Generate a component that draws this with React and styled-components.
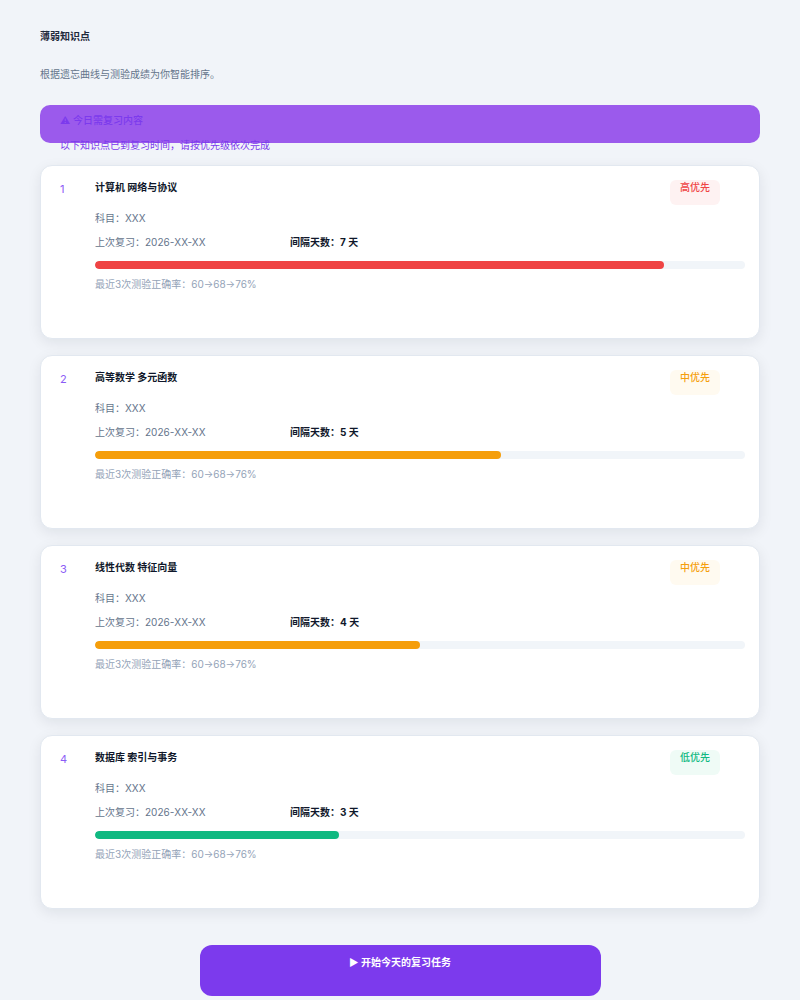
import React from 'react';
import styled, { createGlobalStyle } from 'styled-components';

const GlobalStyle = createGlobalStyle`
  html, body {
    margin: 0;
    padding: 0;
    background: #f1f4f9;
  }
  body {
    font-family: Inter, "Noto Sans CJK SC", sans-serif;
    font-size: 10px;
    line-height: 14px;
    color: #1e293b;
  }
`

const Page = styled.div`
  padding: 29px 40px 40px;
  min-height: 1000px;
  box-sizing: border-box;
`
const Title = styled.h1`
  margin: 0;
  font-size: 10px;
  line-height: 14px;
  font-weight: 700;
  color: #1e293b;
`
const Subtitle = styled.p`
  margin: 24px 0 0;
  color: #64748b;
`
const Banner = styled.div`
  margin-top: 24px;
  height: 38px;
  box-sizing: border-box;
  padding: 8px 20px 0;
  border-radius: 10px;
  background: #9b5aec;
  color: #7c3aed;
`
const BannerTitle = styled.div`
  font-weight: 500;
`
const BannerText = styled.div`
  margin-top: 11px;
  color: #7c3aed;
`
const List = styled.div`
  margin-top: 22px;
  display: flex;
  flex-direction: column;
  gap: 16px;
`
const Card = styled.div`
  height: 174px;
  box-sizing: border-box;
  padding: 14px 14px 0 19px;
  display: flex;
  background: #fff;
  border: 1px solid #e2e8f0;
  border-radius: 12px;
  box-shadow: 0 4px 14px rgba(15, 23, 42, 0.08);
`
const Index = styled.div`
  width: 35px;
  flex-shrink: 0;
  font-size: 11px;
  color: #8b5cf6;
  padding-top: 2px;
`
const Body = styled.div`
  flex: 1;
  min-width: 0;
`
const Head = styled.div`
  display: flex;
  justify-content: space-between;
  align-items: flex-start;
`
const Name = styled.div`
  font-weight: 700;
  color: #0f172a;
`
const Badge = styled.span`
  height: 25px;
  box-sizing: border-box;
  padding: 0 10px;
  margin-right: 25px;
  border-radius: 6px;
  font-weight: 500;
  color: ${p => p.$fg};
  background: ${p => p.$bg};
`
const Subject = styled.div`
  margin-top: 6px;
  color: #64748b;
`
const Meta = styled.div`
  margin-top: 10px;
  display: flex;
`
const MetaDate = styled.span`
  width: 195px;
  color: #64748b;
`
const MetaDays = styled.span`
  font-weight: 700;
  color: #0f172a;
`
const Track = styled.div`
  margin-top: 12px;
  height: 8px;
  border-radius: 4px;
  background: #f1f5f9;
  overflow: hidden;
`
const Fill = styled.div`
  height: 100%;
  border-radius: 4px;
  background: ${p => p.$color};
`
const Scores = styled.div`
  margin-top: 8px;
  color: #94a3b8;
`
const StartButton = styled.button`
  width: 401px;
  height: 51px;
  margin: 36px auto 0;
  padding: 10px 0 0;
  box-sizing: border-box;
  border: none;
  border-radius: 12px;
  background: #7c3aed;
  color: #fff;
  font-family: inherit;
  font-size: 10px;
  line-height: 14px;
  font-weight: 700;
  display: flex;
  justify-content: center;
  align-items: flex-start;
`

const levels = {
  high: { label: '高优先', fg: '#ef4444', bg: '#fef2f2', bar: '#ef4444' },
  mid: { label: '中优先', fg: '#f59e0b', bg: '#fffaf0', bar: '#f59e0b' },
  low: { label: '低优先', fg: '#10b981', bg: '#effbf6', bar: '#10b981' },
}

const items = [
  { name: '计算机 网络与协议', days: 7, level: 'high' },
  { name: '高等数学 多元函数', days: 5, level: 'mid' },
  { name: '线性代数 特征向量', days: 4, level: 'mid' },
  { name: '数据库 索引与事务', days: 3, level: 'low' },
]

const ReviewCard = ({ index, name, days, level }) => {
  const lv = levels[level]
  return (
    <Card>
      <Index>{index}</Index>
      <Body>
        <Head>
          <Name>{name}</Name>
          <Badge $fg={lv.fg} $bg={lv.bg}>{lv.label}</Badge>
        </Head>
        <Subject>科目：XXX</Subject>
        <Meta>
          <MetaDate>上次复习：2026-XX-XX</MetaDate>
          <MetaDays>间隔天数：{days} 天</MetaDays>
        </Meta>
        <Track>
          <Fill $color={lv.bar} style={{ width: `${(days / 8) * 100}%` }} />
        </Track>
        <Scores>最近3次测验正确率：60→68→76%</Scores>
      </Body>
    </Card>
  )
}

export default function App() {
  return (
    <Page>
      <GlobalStyle />
      <Title>薄弱知识点</Title>
      <Subtitle>根据遗忘曲线与测验成绩为你智能排序。</Subtitle>
      <Banner>
        <BannerTitle>⚠ 今日需复习内容</BannerTitle>
        <BannerText>以下知识点已到复习时间，请按优先级依次完成</BannerText>
      </Banner>
      <List>
        {items.map((it, i) => (
          <ReviewCard key={i} index={i + 1} {...it} />
        ))}
      </List>
      <StartButton>▶ 开始今天的复习任务</StartButton>
    </Page>
  )
}
